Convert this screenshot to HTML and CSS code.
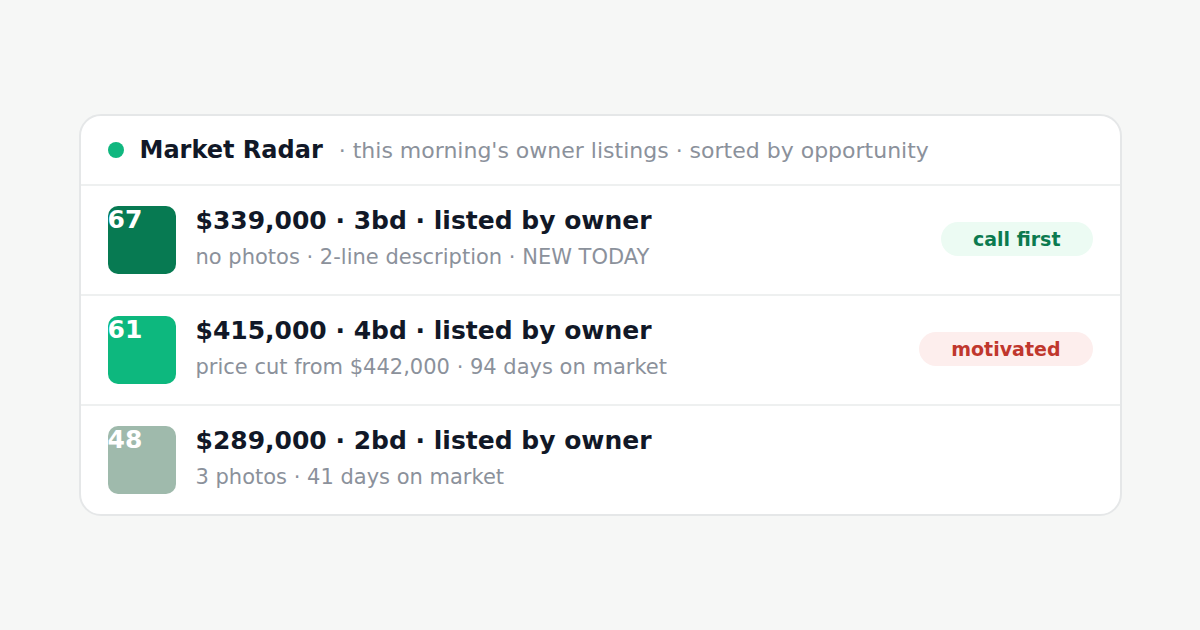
FILE: index.html
```html
<!DOCTYPE html>
<html lang="en">
<head>
    <meta charset="UTF-8">
    <title>Market Radar</title>
    <link rel="stylesheet" href="styles.css">
</head>
<body>

<div class="radar">
    <div class="radar-head">
        <span class="dot"></span>
        <span class="radar-title">Market Radar</span>
        <span class="radar-sub">· this morning's owner listings · sorted by opportunity</span>
    </div>

    <div class="listing">
        <div class="score score-high">67</div>
        <div class="info">
            <div class="price">$339,000 · 3bd · listed by owner</div>
            <div class="meta">no photos · 2-line description · NEW TODAY</div>
        </div>
        <span class="tag tag-green">call first</span>
    </div>

    <div class="listing">
        <div class="score score-mid">61</div>
        <div class="info">
            <div class="price">$415,000 · 4bd · listed by owner</div>
            <div class="meta">price cut from $442,000 · 94 days on market</div>
        </div>
        <span class="tag tag-red">motivated</span>
    </div>

    <div class="listing">
        <div class="score score-low">48</div>
        <div class="info">
            <div class="price">$289,000 · 2bd · listed by owner</div>
            <div class="meta">3 photos · 41 days on market</div>
        </div>
    </div>
</div>

</body>
</html>
```

FILE: styles.css
```css
html, body {
  height: 100%;
}
body {
  margin: 0;
  background: #f6f7f6;
  font-family: "DejaVu Sans", "Liberation Sans", sans-serif;
  display: flex;
  align-items: center;
  justify-content: center;
}
.radar {
  width: 1043px;
  box-sizing: border-box;
  background: #ffffff;
  border: 2px solid #e5e7e8;
  border-radius: 22px;
  overflow: hidden;
}
.radar-head {
  height: 68px;
  display: flex;
  align-items: center;
  padding: 0 27px;
  border-bottom: 2px solid #eef0f0;
}
.dot {
  width: 16px;
  height: 16px;
  border-radius: 50%;
  background: #10b77f;
  margin-right: 16px;
}
.radar-title {
  font-size: 24px;
  font-weight: bold;
  color: #111827;
  margin-right: 16px;
}
.radar-sub {
  font-size: 22px;
  color: #8b919b;
}
.listing {
  height: 108px;
  display: flex;
  align-items: center;
  padding: 0 27px;
  border-bottom: 2px solid #eef0f0;
}
.listing:last-child {
  border-bottom: none;
}
.score {
  width: 68px;
  height: 68px;
  border-radius: 10px;
  color: #ffffff;
  font-size: 25px;
  font-weight: bold;
  line-height: 28px;
  flex-shrink: 0;
  margin-right: 20px;
}
.score-high { background: #077a52; }
.score-mid { background: #0db87e; }
.score-low { background: #9fbaac; }
.info {
  flex: 1;
}
.price {
  font-size: 25px;
  font-weight: bold;
  color: #111827;
  line-height: 30px;
  margin-top: -5px;
}
.meta {
  font-size: 21px;
  color: #8b919b;
  line-height: 26px;
  margin-top: 8px;
}
.tag {
  font-size: 19px;
  font-weight: bold;
  padding: 0 32px;
  height: 34px;
  line-height: 34px;
  border-radius: 17px;
  margin-top: -2px;
}
.tag-green {
  background: #ecfbf3;
  color: #0b7a4f;
}
.tag-red {
  background: #fdeeed;
  color: #c0372d;
}
```
